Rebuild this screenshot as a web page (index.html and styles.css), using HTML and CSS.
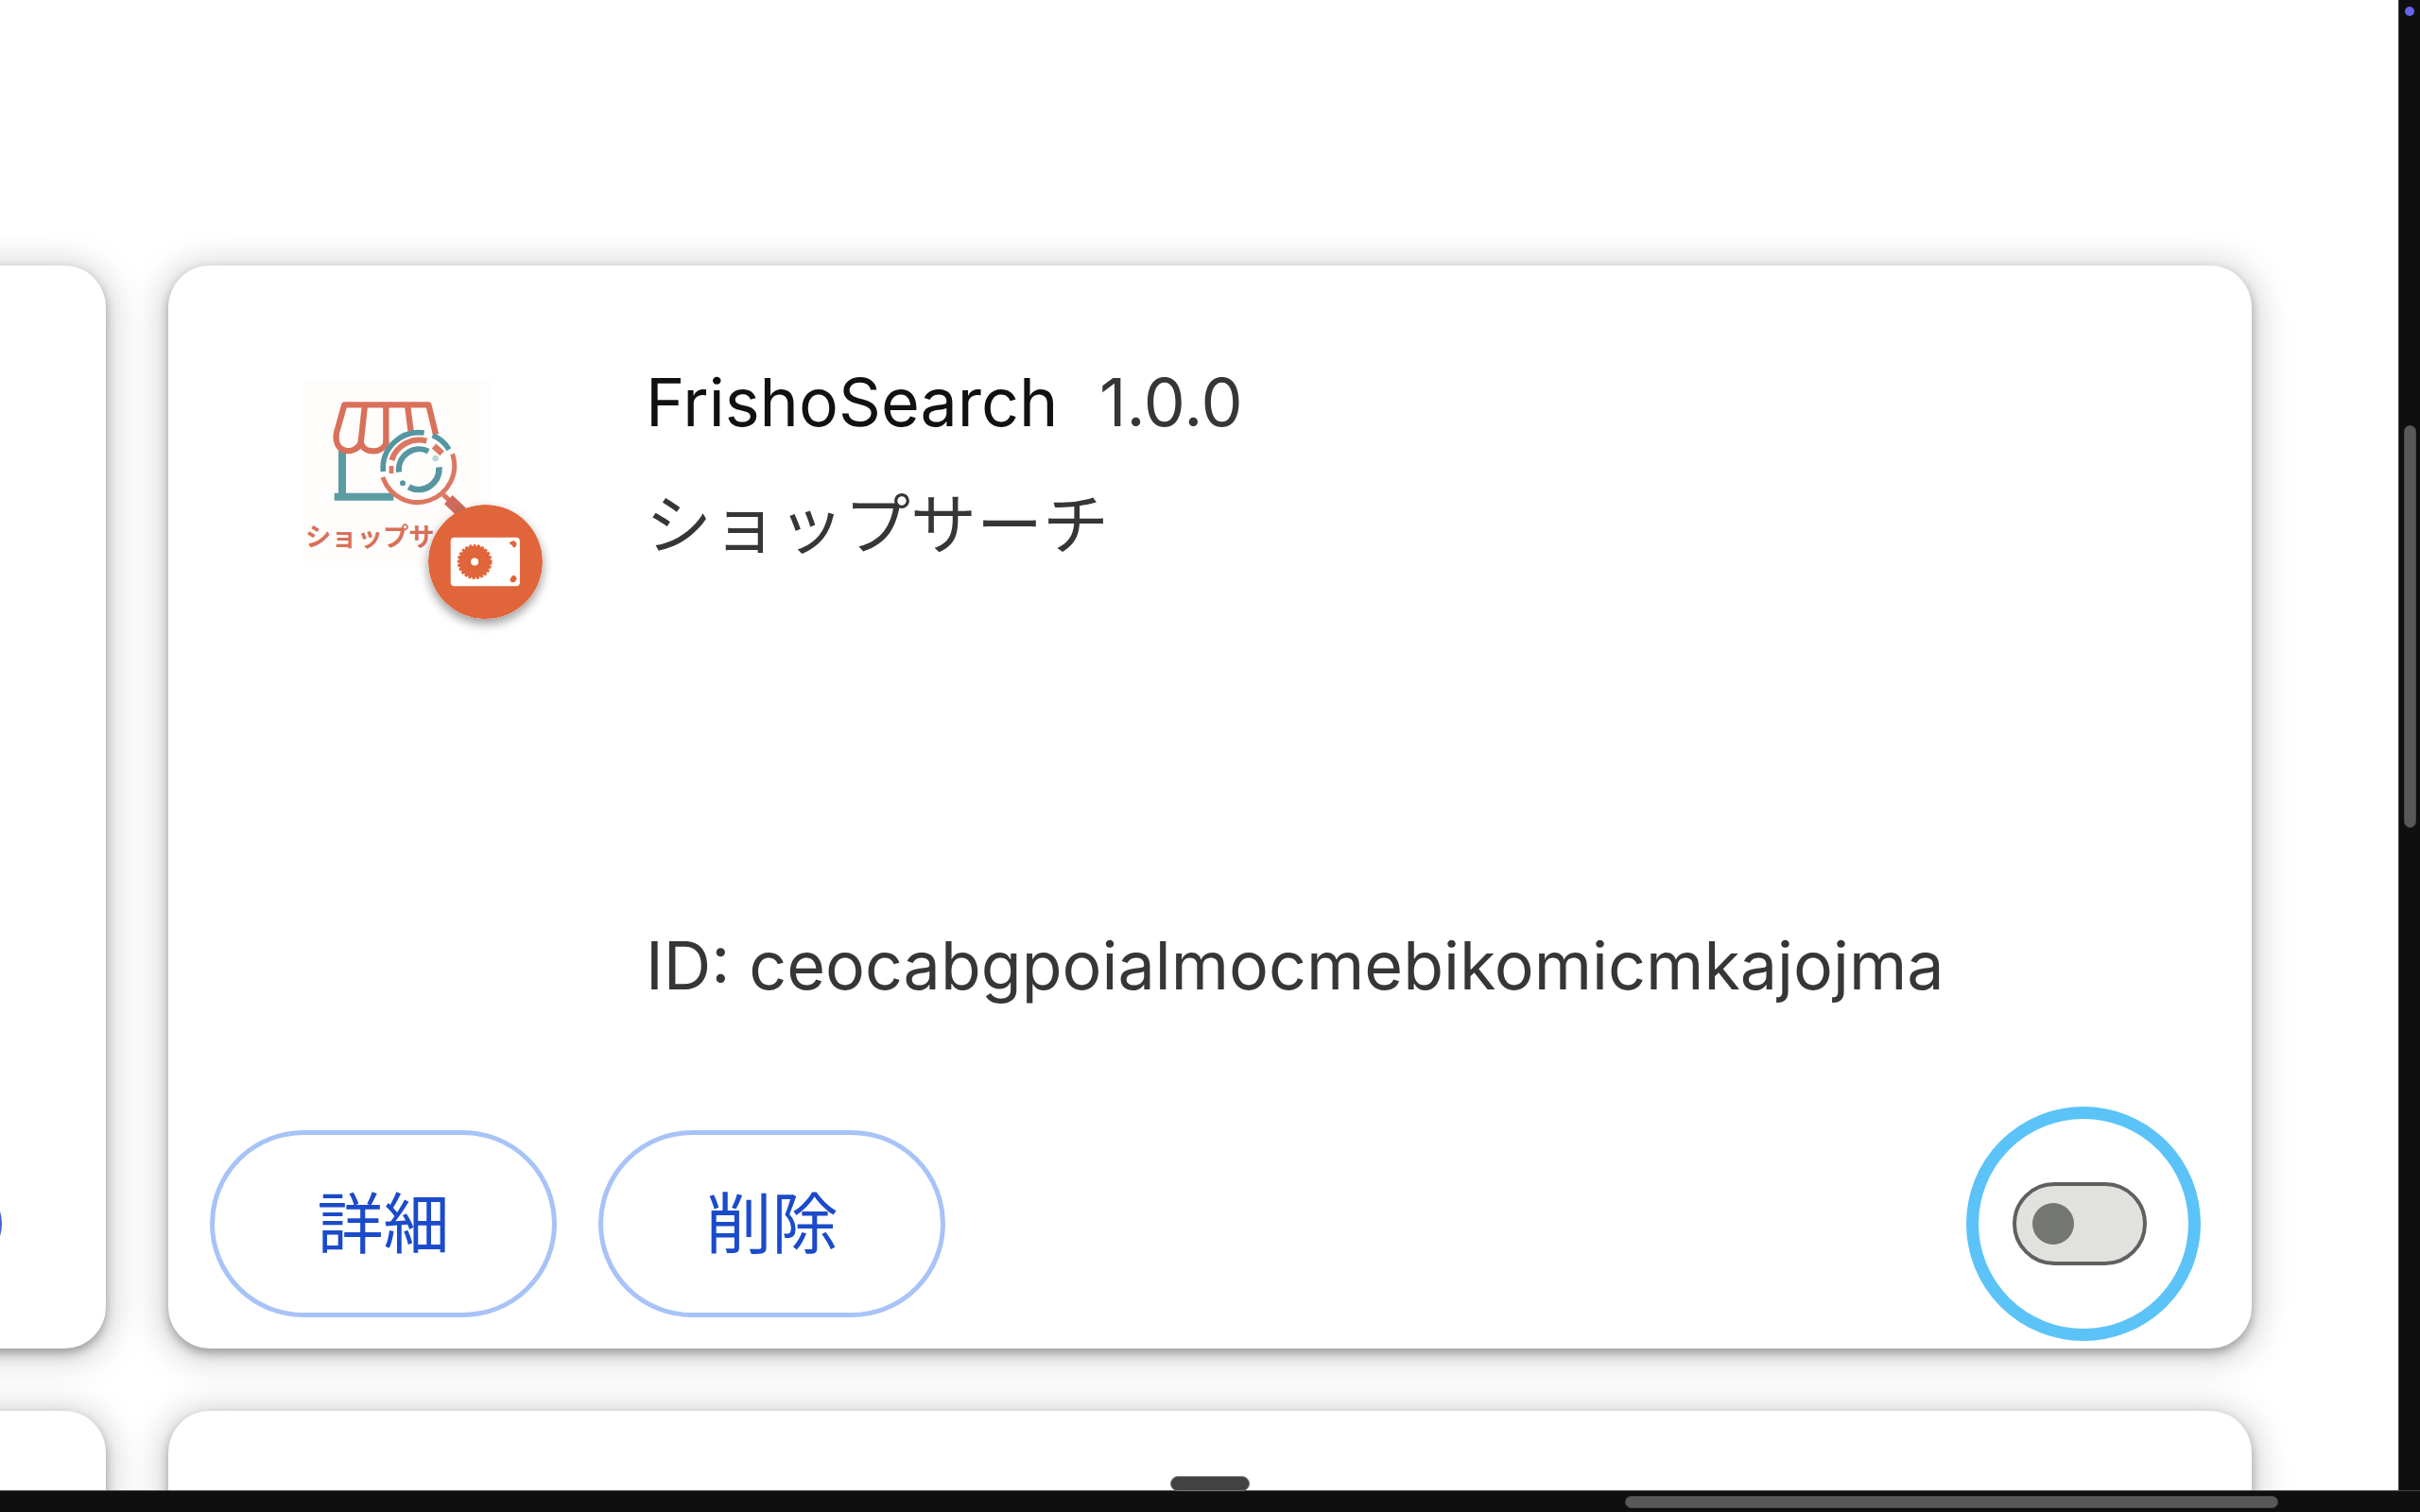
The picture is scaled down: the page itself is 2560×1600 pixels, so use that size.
FILE: index.html
```html
<!DOCTYPE html>
<html lang="ja">
<head>
  <meta charset="UTF-8">
  <title>FrishoSearch</title>
  <link rel="stylesheet" href="styles.css">
</head>
<body>

<main class="viewport">
  <div class="cards">

    <!-- LEFT CARD (scrolled out) -->
    <article class="card card-cut">
      <div class="actions">
        <input type="checkbox" class="toggle" aria-label="オン" checked>
      </div>
    </article>

    <!-- EXTENSION CARD -->
    <article class="card">
      <div class="main">
        <div class="icon-wrap">
          <svg class="icon" viewBox="64 37 594 594">
            <rect x="64" y="37" width="594" height="594" fill="#fefdfc"/>
            <g fill="none" stroke="#5b9ca3" stroke-width="24">
              <path d="M187 262V408"/>
              <path d="M162 408H350"/>
            </g>
            <g fill="none" stroke="#d9705a" stroke-width="19" stroke-linejoin="round">
              <path d="M484 210L461 116H194L169 205C158 275 232 275 246 236C256 273 318 273 328 232"/>
              <path d="M259 116L246 236"/>
              <path d="M326 116V238"/>
              <path d="M394 116L405 202"/>
            </g>
            <circle cx="430" cy="320" r="106" fill="#fefdfc"/>
            <g fill="none" stroke="#5596a0" stroke-width="17">
              <path d="M317 328A114 114 0 0 1 447 205"/>
              <path d="M474 213A114 114 0 0 1 526 258"/>
              <path d="M367 330A65 65 0 0 1 461 264" stroke-width="18"/>
              <path d="M494 314A65 65 0 0 1 398 377" stroke-width="20"/>
            </g>
            <g fill="none" stroke="#dc7761" stroke-width="15">
              <path d="M316 346A116 116 0 1 0 537 272"/>
              <path d="M344 292A92 92 0 0 1 455 231" stroke-width="18"/>
              <path d="M478 247L504 270" stroke-width="20"/>
              <path d="M343 310V334" stroke-width="14"/>
              <path d="M508 402L528 420" stroke-width="15"/>
              <path d="M524 417L585 475" stroke="#cf6b5c" stroke-width="38"/>
            </g>
            <circle cx="379" cy="365" r="9" fill="#5596a0"/>
            <circle cx="483" cy="286" r="10" fill="#b6d8da"/>
            <text class="icon-text" x="70" y="566">ショップサーチ</text>
          </svg>
          <svg class="badge" viewBox="461 434 362 362">
            <circle cx="642" cy="615" r="181" fill="#e0653b"/>
            <rect x="532" y="538" width="219" height="154" rx="12" fill="#fff"/>
            <circle cx="608" cy="615" r="50" fill="#e0653b"/>
            <circle cx="608" cy="615" r="51" fill="none" stroke="#e0653b" stroke-width="8" stroke-dasharray="9 4"/>
            <circle cx="608" cy="615" r="12" fill="#fff"/>
            <path d="M719 553L732 548L741 556L738 568L730 570Q728 561 719 560Z" fill="#e0653b"/>
            <path d="M719 673Q722 662 730 658L737 660L741 668L737 678L726 681Z" fill="#e0653b"/>
          </svg>
        </div>
        <div class="content">
          <h2 class="name">FrishoSearch <span class="version">1.0.0</span></h2>
          <p class="desc">ショップサーチ</p>
          <p class="ext-id">ID: ceocabgpoialmocmebikomicmkajojma</p>
        </div>
      </div>
      <div class="actions">
        <button class="btn">詳細</button>
        <button class="btn">削除</button>
        <label class="ring">
          <input type="checkbox" class="toggle" aria-label="オフ">
        </label>
      </div>
    </article>

    <!-- NEXT ROW -->
    <article class="card card-cut"></article>
    <article class="card"></article>
  </div>
</main>

<!-- SCROLLBARS -->
<div class="bar bar-v">
  <span class="dot"></span>
  <span class="thumb thumb-v"></span>
</div>
<div class="bar bar-h">
  <span class="handle"></span>
  <span class="thumb thumb-h"></span>
</div>

</body>
</html>
```
FILE: styles.css
```css
* { box-sizing: border-box; }
body {
  margin: 0;
  height: 100vh;
  display: grid;
  grid-template: minmax(0, 1fr) 23px / minmax(0, 1fr) 23px;
  background: #0f0f0f;
  color: #353735;
  font-family: Inter, "Noto Sans CJK JP", sans-serif;
  font-size: 70px;
  line-height: 130px;
  overflow: hidden;
}
.viewport {
  background: #fff;
  overflow: hidden;
}

/* cards */
.cards {
  display: grid;
  grid-template-columns: 112px minmax(0, 1fr);
  grid-auto-rows: minmax(1146px, auto);
  gap: 66px;
  padding: 281px 155px 0 0;
}
.card {
  display: flex;
  flex-direction: column;
  justify-content: flex-end;
  padding: 80px 54px 8px 44px;
  border-radius: 44px;
  background: #fff;
  box-shadow: 0 5px 11px rgba(0,0,0,0.3), 0 5px 33px 11px rgba(0,0,0,0.15);
}
.card-cut {
  margin-left: -200px;
  padding-right: 110px;
}
.card-cut .actions { justify-content: flex-end; }
.main {
  flex: 1;
  display: flex;
  gap: 109px;
  padding-left: 99px;
}
.icon-wrap {
  position: relative;
  flex: none;
  width: 253px;
  padding-top: 41px;
}
.icon {
  display: block;
  width: 198px;
  height: 198px;
}
.icon-text {
  fill: #d9705a;
  font-family: "Noto Sans CJK JP", sans-serif;
  font-size: 82px;
  font-weight: 700;
}
.badge {
  position: absolute;
  top: 173px;
  right: 0;
  width: 121px;
  height: 121px;
  border-radius: 50%;
  box-shadow: 0 5px 11px rgba(0,0,0,0.4);
}
.content {
  display: flex;
  flex-direction: column;
}
.name, .desc, .ext-id {
  margin: 0;
  font-size: 70px;
  font-weight: 400;
}
.name { color: #111; }
.version {
  margin-left: 24px;
  color: #353735;
}
.desc { min-height: 466px; }

/* bottom row */
.actions {
  display: flex;
  align-items: center;
  gap: 44px;
  min-height: 248px;
}
.btn {
  width: 367px;
  height: 198px;
  padding: 0 0 8px;
  border: 5px solid #a8c3f8;
  border-radius: 99px;
  background: #fff;
  color: #1b4bca;
  font-family: "Noto Sans CJK JP", sans-serif;
  font-size: 70px;
  line-height: 100px;
}
.ring {
  display: flex;
  align-items: center;
  justify-content: center;
  width: 248px;
  height: 248px;
  margin-left: auto;
  padding-right: 8px;
  border: 13px solid #5bc3f7;
  border-radius: 50%;
}
.toggle {
  appearance: none;
  flex: none;
  display: flex;
  align-items: center;
  width: 142px;
  height: 88px;
  margin: 0;
  padding: 0 17px;
  border: 4px solid #5f615e;
  border-radius: 44px;
  background: #e1e2e0;
}
.toggle::before {
  content: "";
  width: 44px;
  height: 44px;
  border-radius: 50%;
  background: #747673;
}
.toggle:checked {
  border-color: #4b64cf;
  background: #4b64cf;
}

/* scrollbars */
.bar {
  display: flex;
  background: #0f0f0f;
}
.bar-v {
  flex-direction: column;
  align-items: center;
  border-left: 1px solid #444;
}
.bar-h {
  position: relative;
  grid-column: 1 / -1;
  align-items: center;
  justify-content: flex-end;
  padding-right: 150px;
  border-top: 1px solid #444;
}
.dot {
  width: 10px;
  height: 10px;
  margin-top: 7px;
  border-radius: 50%;
  background: #6663ec;
}
.thumb {
  border: 1px solid #4a4a4a;
  border-radius: 7px;
  background: #585858;
}
.thumb-v {
  width: 13px;
  height: 426px;
  margin-top: 433px;
}
.thumb-h {
  width: 691px;
  height: 13px;
}
.handle {
  position: absolute;
  bottom: 22px;
  left: calc(50% - 42px);
  width: 84px;
  height: 16px;
  border: 1px solid #77777a;
  border-radius: 8px;
  background: #424242;
}
```
